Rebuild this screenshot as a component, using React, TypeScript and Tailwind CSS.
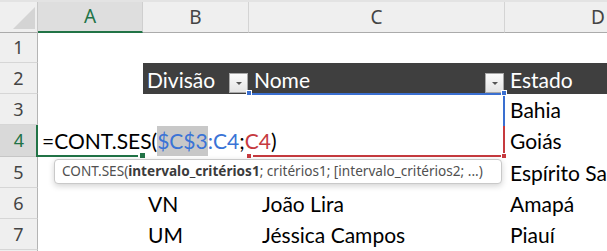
import React from "react";

const cellFont = { fontFamily: "Lato, 'Liberation Sans', sans-serif" };

function FilterButton() {
  return (
    <div className="w-[19px] h-[20px] border border-[#a8a8a8] bg-gradient-to-b from-[#fbfbfb] to-[#e4e4e4] flex items-end justify-center pb-[7px]">
      <div className="w-0 h-0 border-l-[3px] border-r-[3px] border-t-[3px] border-l-transparent border-r-transparent border-t-[#555]" />
    </div>
  );
}

function RowHeader({ n, selected }: { n?: number; selected?: boolean }) {
  return (
    <div
      className={
        selected
          ? "bg-[#d9d9d9] border-b border-[#c6c6c6] text-[#217346] flex items-center justify-center text-[18px] relative"
          : "bg-[#efefef] border-b border-[#d6d6d6] border-r border-r-[#b4b4b4] text-[#444] flex items-center justify-center text-[18px]"
      }
      style={{ fontFamily: "'Noto Sans', 'Open Sans', sans-serif" }}
    >
      {n}
      {selected && <div className="absolute right-0 top-0 bottom-0 w-[2px] bg-[#217346]" />}
    </div>
  );
}

export default function App() {
  return (
    <div className="relative w-[607px] h-[251px] overflow-hidden bg-white select-none">
      <div className="h-[2px] bg-[#e3e3e3]" />
      {/* column headers */}
      <div
        className="grid grid-cols-[38px_105px_106px_256px_186px] h-[30px] text-[19px]"
        style={{ fontFamily: "'Noto Sans', 'Open Sans', sans-serif" }}
      >
        <div className="bg-[#efefef] border-b border-[#ababab] border-r border-r-[#c8c8c8] relative">
          <svg className="absolute left-[13px] top-[5px]" width="22" height="22" viewBox="0 0 22 22">
            <polygon points="22,0 22,22 0,22" fill="#d4d4d4" />
          </svg>
        </div>
        <div className="bg-[#dedede] border-b-2 border-[#217346] border-r border-r-[#cfcfcf] flex items-center justify-center text-[#217346]">
          A
        </div>
        <div className="bg-[#efefef] border-b border-[#ababab] border-r border-r-[#d4d4d4] flex items-center justify-center text-[#444]">
          B
        </div>
        <div className="bg-[#efefef] border-b border-[#ababab] border-r border-r-[#d4d4d4] flex items-center justify-center text-[#444]">
          C
        </div>
        <div className="bg-[#efefef] border-b border-[#ababab] flex items-center justify-center text-[#444]">
          D
        </div>
      </div>

      {/* body grid */}
      <div
        className="grid grid-cols-[38px_105px_106px_256px_186px] grid-rows-[31px_31px_31px_32px_31px_31px_31px_31px] text-[21px] text-black"
        style={cellFont}
      >
        {/* row 1 */}
        <RowHeader n={1} />
        <div />
        <div />
        <div />
        <div />
        {/* row 2 - table header */}
        <RowHeader n={2} />
        <div />
        <div className="bg-[#3f3f3f] text-white flex items-center justify-between pl-[4px] pr-[1px] pt-[2px]">
          <span>Divisão</span>
          <div className="self-end mb-[1px]">
            <FilterButton />
          </div>
        </div>
        <div className="bg-[#3f3f3f] text-white flex items-center justify-between pl-[5px] pr-[1px] pt-[2px]">
          <span>Nome</span>
          <div className="self-end mb-[1px]">
            <FilterButton />
          </div>
        </div>
        <div className="bg-[#3f3f3f] text-white flex items-center pl-[5px] pt-[2px]">Estado</div>
        {/* row 3 */}
        <RowHeader n={3} />
        <div />
        <div />
        <div />
        <div className="flex items-center pl-[5px]">Bahia</div>
        {/* row 4 */}
        <RowHeader n={4} selected />
        <div className="relative z-10 flex items-center whitespace-nowrap pl-[4px] border-l-2 border-[#217346] -ml-[2px] overflow-visible">
          <span className="flex items-stretch h-full">
            <span className="flex items-center">=CONT.SES(</span>
            <span className="flex items-center bg-[#c8c8c8] text-[#3a73d6] h-[30px] self-center">$C$3</span>
            <span className="flex items-center text-[#3a73d6]">:C4</span>
            <span className="flex items-center">;</span>
            <span className="flex items-center text-[#c63a3f]">C4</span>
            <span className="flex items-center">)</span>
          </span>
        </div>
        <div />
        <div />
        <div className="flex items-center pl-[5px]">Goiás</div>
        {/* row 5 */}
        <RowHeader n={5} />
        <div />
        <div />
        <div />
        <div className="flex items-center pl-[5px] whitespace-nowrap">Espírito Santo</div>
        {/* row 6 */}
        <RowHeader n={6} />
        <div />
        <div className="flex items-center pl-[5px]">VN</div>
        <div className="flex items-center pl-[13px]">João Lira</div>
        <div className="flex items-center pl-[5px]">Amapá</div>
        {/* row 7 */}
        <RowHeader n={7} />
        <div />
        <div className="flex items-center pl-[5px]">UM</div>
        <div className="flex items-center pl-[13px]">Jéssica Campos</div>
        <div className="flex items-center pl-[5px]">Piauí</div>
        {/* row 8 */}
        <RowHeader />
        <div />
        <div />
        <div />
        <div />
      </div>

      {/* A4 selection bottom border and handle */}
      <div className="absolute left-[38px] top-[155px] w-[100px] h-[2px] bg-[#217346]" />
      <div className="absolute left-[140px] top-[153px] w-[5px] h-[5px] bg-[#217346] border border-white box-content -translate-x-[1px] -translate-y-[1px]" />

      {/* blue range C3:C4 */}
      <div className="absolute left-[251px] top-[93px] w-[254px] h-[2px] bg-[#3a6fd0]" />
      <div className="absolute left-[503px] top-[93px] w-[2px] h-[33px] bg-[#3a6fd0]" />
      <div className="absolute left-[247px] top-[91px] w-[4px] h-[4px] bg-[#3a6fd0] ring-1 ring-white" />
      <div className="absolute left-[502px] top-[91px] w-[4px] h-[4px] bg-[#3a6fd0] ring-1 ring-white" />

      {/* red range C4 */}
      <div className="absolute left-[253px] top-[155px] w-[252px] h-[2px] bg-[#c63a3f]" />
      <div className="absolute left-[503px] top-[126px] w-[2px] h-[31px] bg-[#c63a3f]" />
      <div className="absolute left-[247px] top-[154px] w-[4px] h-[4px] bg-[#c63a3f] ring-1 ring-white" />
      <div className="absolute left-[502px] top-[154px] w-[4px] h-[4px] bg-[#c63a3f] ring-1 ring-white" />

      {/* function tooltip */}
      <div
        className="absolute left-[54px] top-[159px] w-[448px] h-[25px] bg-white border border-[#c9c9c9] rounded-[4px] shadow-[0_2px_6px_rgba(0,0,0,0.18)] flex items-center pl-[7px] text-[13.6px] text-[#505050] whitespace-nowrap z-20"
        style={{ fontFamily: "'Noto Sans', 'Open Sans', sans-serif" }}
      >
        CONT.SES(<b className="font-bold text-[#3b3b3b]">intervalo_critérios1</b>; critérios1; [intervalo_critérios2; ...)
      </div>
    </div>
  );
}
